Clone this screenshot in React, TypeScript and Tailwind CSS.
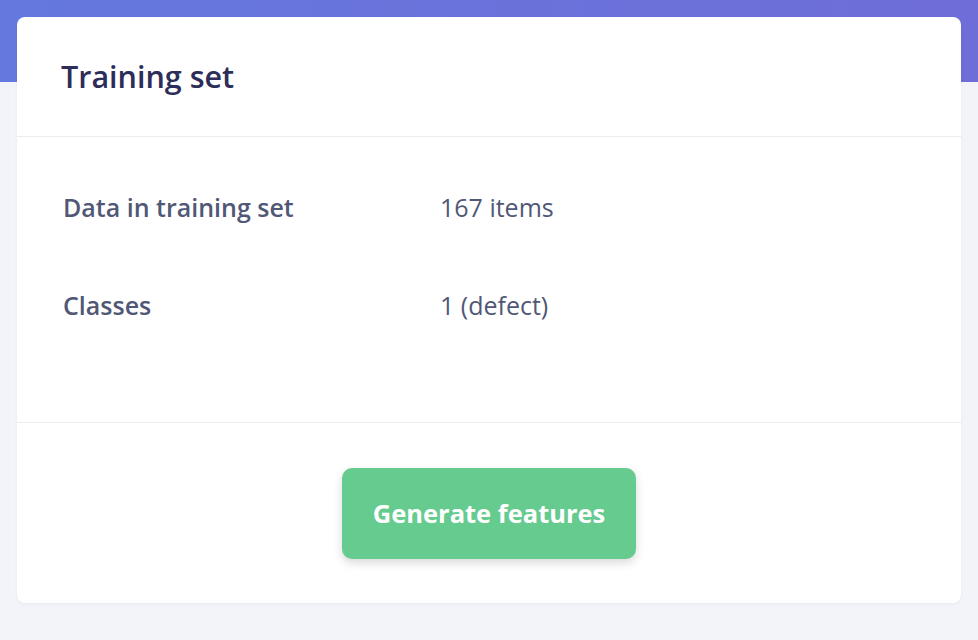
export default function App() {
  const rows = [
    { label: 'Data in training set', value: '167 items' },
    { label: 'Classes', value: '1 (defect)' },
  ];

  return (
    <div className="relative min-h-[640px] w-full bg-[#f3f4f9] font-['Open_Sans',sans-serif]">
      <div className="absolute inset-x-0 top-0 h-[82px] bg-gradient-to-r from-[#6478dd] to-[#6f6dd8]" />
      <div className="relative px-[17px] pt-[17px]">
        <div className="rounded-lg bg-white shadow-[0_1px_3px_rgba(40,45,90,0.06)]">
          <div className="flex h-[120px] items-center border-b border-[#ececf0] px-[44px]">
            <h1 className="text-[30.5px] font-semibold text-[#2c2d58]">Training set</h1>
          </div>
          <div className="h-[286px] border-b border-[#ececf0] px-[46px] pt-[22px]">
            {rows.map((r) => (
              <div key={r.label} className="flex h-[98px] items-center text-[25px] text-[#505876]">
                <div className="w-[377px] font-semibold">{r.label}</div>
                <div>{r.value}</div>
              </div>
            ))}
          </div>
          <div className="flex h-[180px] items-center justify-center">
            <button className="h-[91px] w-[294px] rounded-[10px] bg-[#66cb8f] text-[25.5px] font-bold text-white shadow-[0_4px_10px_rgba(0,0,0,0.15)]">
              Generate features
            </button>
          </div>
        </div>
      </div>
    </div>
  );
}
